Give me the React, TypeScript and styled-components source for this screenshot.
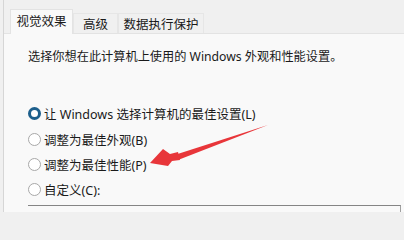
import React from "react";
import styled, { createGlobalStyle } from "styled-components";

const Global = createGlobalStyle`
  html, body { margin: 0; padding: 0; background: #f0f0f0; }
  body { font-family: "Noto Sans", "Noto Sans CJK SC", sans-serif; }
`;

const Screen = styled.div`
  position: relative;
  width: 404px;
  height: 212px;
  overflow: hidden;
  background: #f0f0f0;
  padding-left: 3px;
  box-sizing: border-box;
`;

const Frame = styled.div`
  height: 100%;
  border-left: 1px solid #d6d6d6;
  display: flex;
  flex-direction: column;
`;

const TabStrip = styled.div`
  display: flex;
  align-items: flex-end;
  height: 33px;
  flex-shrink: 0;
  padding-left: 6px;
  box-sizing: border-box;
`;

const Tab = styled.div<{ $active?: boolean; $w: number }>`
  width: ${(p) => p.$w}px;
  height: ${(p) => (p.$active ? 25 : 20)}px;
  box-sizing: border-box;
  display: flex;
  align-items: center;
  justify-content: center;
  font-family: "Noto Sans CJK SC", sans-serif;
  font-size: 12.5px;
  color: #1a1a1a;
  background: ${(p) => (p.$active ? "#f9f9f9" : "#f0f0f0")};
  border: 1px solid ${(p) => (p.$active ? "#e3e3e3" : "#e6e6e6")};
  border-bottom: none;
  margin-bottom: ${(p) => (p.$active ? -1 : 0)}px;
  position: relative;
  z-index: ${(p) => (p.$active ? 1 : 0)};
  padding-bottom: ${(p) => (p.$active ? 3 : 0)}px;
`;

const Panel = styled.div`
  flex: 1;
  background: #f9f9f9;
  border-top: 1px solid #e3e3e3;
  padding: 14px 0 0 24px;
  display: flex;
  flex-direction: column;
`;

const Desc = styled.div`
  font-family: "Noto Sans", "Noto Sans CJK SC", sans-serif;
  font-size: 12.2px;
  line-height: 18px;
  color: #1a1a1a;
  margin-bottom: 34px;
`;

const Options = styled.div`
  display: flex;
  flex-direction: column;
`;

const Option = styled.label<{ $h: number }>`
  display: flex;
  align-items: center;
  height: ${(p) => p.$h}px;
  gap: 3px;
  font-family: "Noto Sans", "Noto Sans CJK SC", sans-serif;
  font-size: 12.5px;
  color: #1a1a1a;
`;

const Radio = styled.span<{ $checked?: boolean }>`
  width: 13px;
  height: 13px;
  box-sizing: border-box;
  border-radius: 50%;
  background: #ffffff;
  border: ${(p) => (p.$checked ? "3.5px solid #1d5f8c" : "1px solid #a8a8a8")};
  flex-shrink: 0;
`;

const ListBox = styled.div`
  margin-top: 3px;
  margin-right: 3px;
  height: 10px;
  border-top: 1.5px solid #858585;
  border-right: 1px solid #a0a0a0;
`;

const ArrowLayer = styled.svg`
  position: absolute;
  left: 0;
  top: 0;
  pointer-events: none;
`;

const options = [
  { text: "让 Windows 选择计算机的最佳设置(L)", checked: true, h: 26 },
  { text: "调整为最佳外观(B)", h: 26 },
  { text: "调整为最佳性能(P)", h: 24 },
  { text: "自定义(C):", h: 26 },
];

export default function App() {
  return (
    <>
      <Global />
      <Screen>
        <Frame>
          <TabStrip>
            <Tab $active $w={63}>视觉效果</Tab>
            <Tab $w={45}>高级</Tab>
            <Tab $w={86}>数据执行保护</Tab>
          </TabStrip>
          <Panel>
            <Desc>选择你想在此计算机上使用的 Windows 外观和性能设置。</Desc>
            <Options>
              {options.map((o) => (
                <Option key={o.text} $h={o.h}>
                  <Radio $checked={o.checked} />
                  {o.text}
                </Option>
              ))}
            </Options>
            <ListBox />
          </Panel>
        </Frame>
        <ArrowLayer width="404" height="212" viewBox="0 0 404 212">
          <path d="M268 125 L176 154.5 L178 160 Z" fill="#e8363a" />
          <path
            d="M150 163 L163 149 L170 154 L178 152 L180 160 L172 161 L168 166 Z"
            fill="#e8363a"
          />
        </ArrowLayer>
      </Screen>
    </>
  );
}
